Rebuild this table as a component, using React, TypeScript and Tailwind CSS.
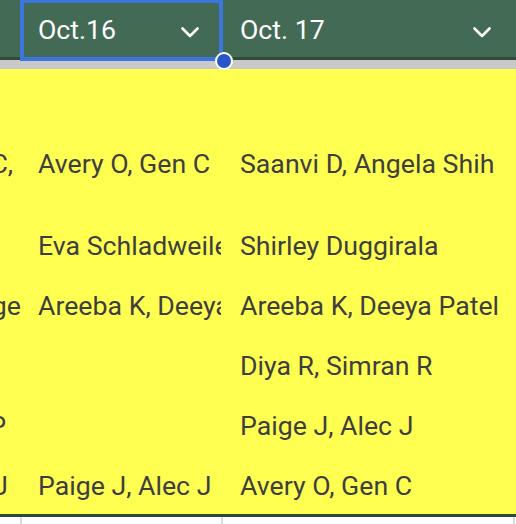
const FONT = { fontFamily: "Roboto, 'Liberation Sans', sans-serif" };

type Row = {
  h: string;
  left?: string;
  leftPad?: string;
  mid?: string;
  right?: string;
};

const rows: Row[] = [
  { h: "h-[63px]" },
  { h: "h-[60px]", left: "Avery O, Gen C,", leftPad: "pr-[8px]", mid: "Avery O, Gen C", right: "Saanvi D, Angela Shih" },
  { h: "h-[22px]" },
  { h: "h-[60px]", mid: "Eva Schladweiler", right: "Shirley Duggirala" },
  { h: "h-[60px]", left: "Shirley, Paige", leftPad: "pr-[0px]", mid: "Areeba K, Deeya Patel", right: "Areeba K, Deeya Patel" },
  { h: "h-[60px]", right: "Diya R, Simran R" },
  { h: "h-[60px]", left: "Diya R, Simran P", leftPad: "pr-[15px]", right: "Paige J, Alec J" },
  { h: "h-[60px]", left: "Paige J, Alec J", leftPad: "pr-[13px]", mid: "Paige J, Alec J", right: "Avery O, Gen C" },
];

function Chevron() {
  return (
    <svg width="18" height="11" viewBox="0 0 18 11" className="mt-[27px] shrink-0">
      <polyline
        points="1.5,1.5 9,9 16.5,1.5"
        fill="none"
        stroke="white"
        strokeWidth="2.6"
        strokeLinecap="round"
        strokeLinejoin="round"
      />
    </svg>
  );
}

function HeaderCell({ label, width, pad }: { label: string; width: string; pad: string }) {
  return (
    <div className={`${width} shrink-0 flex items-start justify-between ${pad} pr-[23px]`}>
      <span className="mt-[15px] text-[26.7px] leading-[30px] text-white whitespace-nowrap">{label}</span>
      <Chevron />
    </div>
  );
}

export default function App() {
  return (
    <div className="relative w-[516px] h-[524px] overflow-hidden bg-white" style={FONT}>
      {/* header row */}
      <div className="flex h-[57px] bg-[#436a55]">
        <div className="w-[21px] shrink-0" />
        <HeaderCell label="Oct.16" width="w-[201px]" pad="pl-[17px]" />
        <HeaderCell label="Oct. 17" width="w-[292px]" pad="pl-[18px]" />
        <div className="flex-1" />
      </div>
      <div className="h-[3px] bg-[#2f4b3c]" />
      <div className="h-[9px] bg-[#c9c9c9]" />

      {/* body */}
      <div className="bg-[#ffff52] text-[#3e3e3e] text-[26.7px] leading-[30px]">
        {rows.map((r, i) => (
          <div key={i} className={`flex ${r.h}`}>
            <div className={`w-[21px] shrink-0 flex items-end justify-end overflow-hidden pb-[13px] ${r.leftPad ?? ""}`}>
              {r.left && <span className="whitespace-nowrap shrink-0">{r.left}</span>}
            </div>
            <div className="w-[200px] shrink-0 flex items-end overflow-hidden pl-[17px] pb-[13px] mr-[1px]">
              {r.mid && <span className="whitespace-nowrap shrink-0">{r.mid}</span>}
            </div>
            <div className="w-[292px] shrink-0 flex items-end overflow-hidden pl-[18px] pb-[13px]">
              {r.right && <span className="whitespace-nowrap shrink-0">{r.right}</span>}
            </div>
            <div className="flex-1" />
          </div>
        ))}
      </div>
      <div className="h-[3px] bg-[#2c4a3a]" />

      {/* grid below */}
      <div className="flex h-[10px]">
        <div className="w-[20px] shrink-0" />
        <div className="w-[2px] bg-[#dcdcdc]" />
        <div className="w-[199px] shrink-0" />
        <div className="w-[2px] bg-[#dcdcdc]" />
        <div className="w-[290px] shrink-0" />
        <div className="w-[2px] bg-[#dcdcdc]" />
      </div>

      {/* selection */}
      <div className="absolute left-[20px] top-[-1px] w-[203px] h-[62px] border-4 border-[#3b75de]" />
      <div className="absolute left-[215px] top-[52px] w-[18px] h-[18px] rounded-full bg-[#2857c9] border-2 border-white" />
    </div>
  );
}
